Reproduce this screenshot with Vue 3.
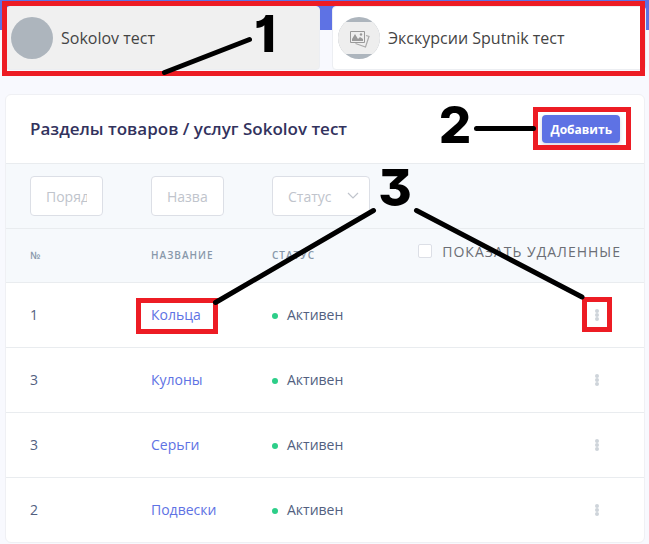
<script setup>
import { ref } from 'vue'

const rows = [
  { order: 1, name: 'Кольца' },
  { order: 3, name: 'Кулоны' },
  { order: 3, name: 'Серьги' },
  { order: 2, name: 'Подвески' }
]
const order = ref('')
const name = ref('')
const status = ref('')
const showDeleted = ref(false)
</script>

<template>
  <main class="page">
    <nav class="shops">
      <a class="shop active" href="#sokolov">
        <span class="avatar"></span>
        <span>Sokolov тест</span>
      </a>
      <a class="shop" href="#sputnik">
        <span class="avatar">
          <svg viewBox="0 0 42 42" aria-hidden="true">
            <path d="M0 5h42v32H0z" fill="#eee" />
            <path d="M28 18.500l3 .8-3.500 10.700-10-3.500" fill="none" stroke="#aaa" stroke-width="1.200" />
            <path d="M12.500 14.500h14v11h-14z" fill="#eee" stroke="#999" />
            <path d="M14 24v-2l3-5 3 5 2-2 3 2v2z" fill="#999" />
            <circle cx="23" cy="17.500" r="1.200" fill="#999" />
          </svg>
        </span>
        <span>Экскурсии Sputnik тест</span>
      </a>
    </nav>

    <section class="card">
      <header class="card-head">
        <h1>Разделы товаров / услуг Sokolov тест</h1>
        <button class="add" type="button">Добавить</button>
      </header>
      <table>
        <colgroup>
          <col class="narrow" />
          <col class="narrow" />
          <col class="medium" />
          <col />
        </colgroup>
        <thead>
          <tr class="filters">
            <td><input v-model="order" class="field" type="text" placeholder="Порядок" aria-label="Порядок" /></td>
            <td><input v-model="name" class="field" type="text" placeholder="Название" aria-label="Название" /></td>
            <td>
              <div class="select">
                <select v-model="status" class="field" aria-label="Статус">
                  <option value="">Статус</option>
                  <option value="active">Активен</option>
                </select>
                <svg class="chevron" viewBox="0 0 12 8" aria-hidden="true">
                  <path d="M1 1l5 5 5-5" fill="none" stroke="#c0c4cc" stroke-width="1.200" />
                </svg>
              </div>
            </td>
            <td></td>
          </tr>
          <tr class="titles">
            <th scope="col">№</th>
            <th scope="col">Название</th>
            <th scope="col">Статус</th>
            <th scope="col" class="last">
              <label class="toggle">
                <input v-model="showDeleted" type="checkbox" />
                <span>Показать удаленные</span>
              </label>
            </th>
          </tr>
        </thead>
        <tbody>
          <tr v-for="row in rows" :key="row.name">
            <td>{{ row.order }}</td>
            <td><a href="#section">{{ row.name }}</a></td>
            <td><span class="status">Активен</span></td>
            <td class="last">
              <button class="more" type="button" aria-label="Действия">
                <svg viewBox="0 0 4 12" aria-hidden="true">
                  <circle cx="2" cy="2" r="2" />
                  <circle cx="2" cy="6" r="2" />
                  <circle cx="2" cy="10" r="2" />
                </svg>
              </button>
            </td>
          </tr>
        </tbody>
      </table>
    </section>

    <svg class="notes" width="649" height="544" viewBox="0 0 649 544">
      <g fill="none" stroke="#ed1c24" stroke-width="5">
        <path d="M4.500 3.500h638v70h-638z" />
        <path d="M535.500 109.500h93v38h-93z" />
        <path d="M138.500 300.500h77v31h-77z" />
        <path d="M584.500 299.500h25v30h-25z" />
      </g>
      <g stroke="#000" stroke-width="5" stroke-linecap="round">
        <path d="M249.500 39.500L164.500 72.500" />
        <path d="M476.500 128.500H533.500" />
        <path d="M373.500 210.500L215.500 302.500" />
        <path d="M416.500 210.500L582 297" />
      </g>
      <g class="digits" text-anchor="middle">
        <text x="265" y="52">1</text>
        <text x="455" y="143">2</text>
        <text x="395" y="206">3</text>
      </g>
    </svg>
  </main>
</template>

<style>
body {
  background: #f8f9fe;
}
</style>

<style scoped>
.page {
  position: relative;
  padding: 6px 4px 2px 5px;
  background: linear-gradient(#5e72e4, #5e72e4) top / 100% 30px no-repeat;
  font-family: "Open Sans", "Noto Sans", sans-serif;
  color: #525f7f;
}
.page * {
  box-sizing: border-box;
}
.shops {
  display: grid;
  grid-template-columns: 1fr 1fr;
  gap: 12px;
  margin: 0 -1px 0 1px;
}
.shop {
  display: flex;
  align-items: center;
  gap: 8px;
  height: 64px;
  padding: 0 5px;
  border: 1px solid #eceef2;
  border-radius: 4px;
  background: #fff;
  color: #444;
  font-size: 16px;
  text-decoration: none;
}
.shop.active {
  padding: 0 4px;
  background: #f0f0f0;
}
.avatar {
  width: 42px;
  height: 42px;
  border-radius: 50%;
  background: #adb5bd;
  overflow: hidden;
}
.avatar svg {
  display: block;
}
.card {
  margin-top: 24px;
  border: 1px solid #eff0f4;
  border-radius: 6px;
  background: #fff;
  overflow: hidden;
}
.card-head {
  display: flex;
  align-items: center;
  justify-content: space-between;
  height: 68px;
  padding: 0 24px;
}
h1 {
  margin: 0;
  padding-bottom: 2px;
  color: #32325d;
  font-size: 17px;
  font-weight: 600;
}
.add {
  height: 28px;
  padding: 0 8px;
  border: 0;
  border-radius: 4px;
  background: #5e72e4;
  box-shadow: 0 2px 4px rgba(50, 50, 93, 0.2);
  color: #fff;
  font: 700 12px "Open Sans", sans-serif;
}
table {
  width: 100%;
  border-collapse: separate;
  border-spacing: 0;
  table-layout: fixed;
  font-size: 14px;
}
.narrow {
  width: 121px;
}
.medium {
  width: 146px;
}
td,
th {
  height: 65px;
  padding: 0 24px;
  border-top: 1px solid #e9ecef;
  text-align: left;
}
tbody td,
.titles th {
  padding-bottom: 2px;
}
thead {
  background: #f6f9fc;
}
.titles th {
  height: 54px;
  color: #8898aa;
  font-size: 10px;
  font-weight: 600;
  letter-spacing: 1px;
  text-transform: uppercase;
  white-space: nowrap;
}
.field {
  display: block;
  width: 100%;
  height: 40px;
  padding: 0 15px;
  border: 1px solid #dcdfe6;
  border-radius: 4px;
  background: #fff;
  color: #c0c4cc;
  font: 14px "Open Sans", sans-serif;
  appearance: none;
}
.field::placeholder {
  color: #c0c4cc;
}
.select {
  position: relative;
}
.chevron {
  position: absolute;
  top: 16px;
  right: 11px;
  width: 12px;
  height: 8px;
  pointer-events: none;
}
th.last,
td.last {
  padding-bottom: 0;
  text-align: right;
}
.titles th.last {
  padding: 0 23px 8px 0;
}
.toggle {
  display: inline-flex;
  align-items: center;
  gap: 10px;
  color: #6b6e75;
  font-size: 14px;
  font-weight: 400;
}
.toggle input {
  width: 14px;
  height: 14px;
  margin: 0;
  border: 1px solid #dcdfe6;
  border-radius: 2px;
  background: #fff;
  appearance: none;
}
.toggle input:checked {
  background: #5e72e4;
}
td a {
  color: #5e72e4;
  text-decoration: none;
}
.status {
  display: flex;
  align-items: center;
  gap: 9px;
}
.status::before {
  content: "";
  width: 6px;
  height: 6px;
  margin-top: 3px;
  border-radius: 50%;
  background: #2dce89;
}
.more {
  display: inline-flex;
  align-items: center;
  justify-content: center;
  width: 46px;
  height: 28px;
  padding: 0;
  border: 0;
  background: none;
}
.more svg {
  width: 4px;
  height: 12px;
  fill: #ced4da;
}
.notes {
  position: absolute;
  top: 0;
  left: 0;
  pointer-events: none;
}
.digits {
  font: 800 51px Inter, sans-serif;
  font-feature-settings: "cv01", "cv09";
}
</style>
